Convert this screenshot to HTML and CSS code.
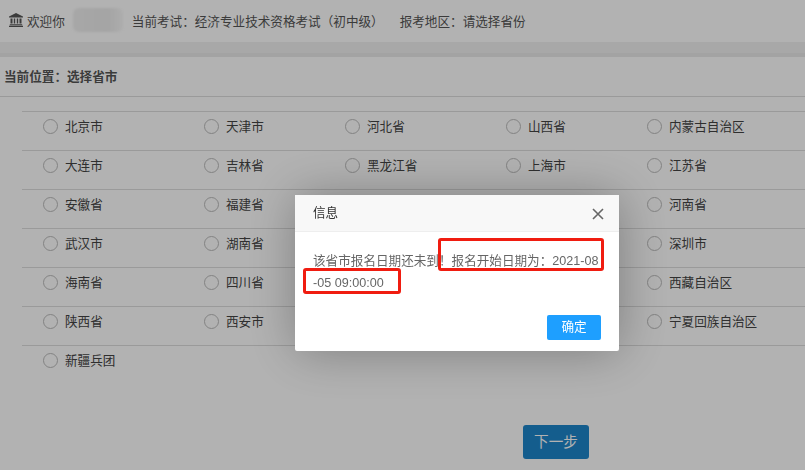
FILE: index.html
```html
<!DOCTYPE html>
<html lang="zh-CN">
<head>
    <meta charset="UTF-8">
    <meta name="viewport" content="width=device-width, initial-scale=1.0">
    <title>选择省市</title>
    <link rel="stylesheet" href="styles.css">
</head>
<body>
    <div class="header">
        <svg class="bank" viewBox="0 0 14 14" width="14" height="14">
            <path d="M7 0 L14 3.4 V4.6 H0 V3.4 Z M1.5 5.5 H3.5 V10.5 H1.5 Z M4.8 5.5 H6.2 V10.5 H4.8 Z M7.8 5.5 H9.2 V10.5 H7.8 Z M10.5 5.5 H12.5 V10.5 H10.5 Z M0.8 11.2 H13.2 V12.3 H0.8 Z M0 12.8 H14 V14 H0 Z" fill="#555"/>
        </svg>
        <span class="welcome">欢迎你</span>
        <span class="name-blur"></span>
        <span class="exam">当前考试：经济专业技术资格考试（初中级）</span>
        <span class="area">报考地区：请选择省份</span>
    </div>
    <div class="band"></div>
    <div class="location">当前位置：选择省市</div>

    <div class="cities">
        <div class="city-row">
            <label class="city"><i class="radio"></i>北京市</label>
            <label class="city"><i class="radio"></i>天津市</label>
            <label class="city"><i class="radio"></i>河北省</label>
            <label class="city"><i class="radio"></i>山西省</label>
            <label class="city"><i class="radio"></i>内蒙古自治区</label>
        </div>
        <div class="city-row">
            <label class="city"><i class="radio"></i>大连市</label>
            <label class="city"><i class="radio"></i>吉林省</label>
            <label class="city"><i class="radio"></i>黑龙江省</label>
            <label class="city"><i class="radio"></i>上海市</label>
            <label class="city"><i class="radio"></i>江苏省</label>
        </div>
        <div class="city-row">
            <label class="city"><i class="radio"></i>安徽省</label>
            <label class="city"><i class="radio"></i>福建省</label>
            <label class="city"><i class="radio"></i>江西省</label>
            <label class="city"><i class="radio"></i>山东省</label>
            <label class="city"><i class="radio"></i>河南省</label>
        </div>
        <div class="city-row">
            <label class="city"><i class="radio"></i>武汉市</label>
            <label class="city"><i class="radio"></i>湖南省</label>
            <label class="city"><i class="radio"></i>广东省</label>
            <label class="city"><i class="radio"></i>广西壮族自治区</label>
            <label class="city"><i class="radio"></i>深圳市</label>
        </div>
        <div class="city-row">
            <label class="city"><i class="radio"></i>海南省</label>
            <label class="city"><i class="radio"></i>四川省</label>
            <label class="city"><i class="radio"></i>贵州省</label>
            <label class="city"><i class="radio"></i>云南省</label>
            <label class="city"><i class="radio"></i>西藏自治区</label>
        </div>
        <div class="city-row">
            <label class="city"><i class="radio"></i>陕西省</label>
            <label class="city"><i class="radio"></i>西安市</label>
            <label class="city"><i class="radio"></i>甘肃省</label>
            <label class="city"><i class="radio"></i>青海省</label>
            <label class="city"><i class="radio"></i>宁夏回族自治区</label>
        </div>
        <div class="city-row">
            <label class="city"><i class="radio"></i>新疆兵团</label>
        </div>
    </div>

    <div class="actions">
        <button class="next" type="button">下一步</button>
    </div>

    <div class="shade"></div>

    <div class="dialog">
        <div class="dialog-title">信息
            <svg class="close" viewBox="0 0 12 12" width="12" height="12">
                <path d="M1 1 L11 11 M11 1 L1 11" stroke="#666" stroke-width="1.6" fill="none"/>
            </svg>
        </div>
        <div class="dialog-body">该省市报名日期还未到！报名开始日期为：2021-08-05 09:00:00</div>
        <div class="dialog-btns">
            <a class="dialog-ok">确定</a>
        </div>
    </div>

    <div class="mark mark-a"></div>
    <div class="mark mark-b"></div>
</body>
</html>
```

FILE: styles.css
```css
body {
    margin: 0;
    padding: 0;
    height: 470px;
    overflow: hidden;
    background-color: #fff;
    color: #555;
    font-family: "Liberation Sans", "Noto Sans CJK SC", sans-serif;
    font-size: 12.6px;
}
.header {
    height: 42px;
    padding-left: 9px;
    display: flex;
    align-items: center;
}
.bank {
    margin-right: 4px;
    margin-top: -2px;
}
.welcome {
    margin-top: -2px;
}
.name-blur {
    width: 50px;
    height: 24px;
    margin: -2px 9px 0 8px;
    background: linear-gradient(90deg, #f0f0f0 0, #ececec 70%, #f8f8f8 100%);
    border-radius: 6px;
    filter: blur(1px);
}
.exam {
    margin-top: -2px;
}
.area {
    margin: -2px 0 0 16px;
}
.band {
    height: 15px;
    background: linear-gradient(#f1f1f1 0, #f1f1f1 11px, #eaeaea 11px);
}
.location {
    height: 40px;
    line-height: 40px;
    padding-left: 4px;
    font-weight: bold;
    border-bottom: 1px solid #ddd;
    box-sizing: border-box;
}
.cities {
    margin: 14px 0 0 22px;
}
.city-row {
    height: 39px;
    box-sizing: border-box;
    border-top: 1px solid #ddd;
    display: grid;
    grid-template-columns: 161px 141px 161px 141px 1fr;
}
.city {
    display: flex;
    align-items: center;
    height: 27px;
    padding-left: 21px;
    color: #444;
}
.radio {
    flex: none;
    width: 13px;
    height: 13px;
    margin: 2px 7px 0 0;
    border: 1px solid #bbb;
    border-radius: 50%;
    background-color: #fff;
}
.actions {
    margin-top: 41px;
    padding-left: 523px;
}
.next {
    width: 66px;
    height: 34px;
    padding: 0 0 3px;
    border: none;
    border-radius: 3px;
    background-color: #1e86cb;
    color: #fff;
    font: inherit;
    font-size: 14.6px;
}
.shade {
    position: fixed;
    top: 0;
    left: 0;
    right: 0;
    bottom: 0;
    background-color: rgba(0, 0, 0, 0.3);
}
.dialog {
    position: fixed;
    left: 295px;
    top: 195px;
    width: 324px;
    height: 156px;
    background-color: #fff;
    box-shadow: 1px 1px 50px rgba(0, 0, 0, 0.3);
    border-radius: 2px;
}
.dialog-title {
    height: 37px;
    line-height: 36px;
    padding-left: 18px;
    background-color: #f8f8f8;
    border-bottom: 1px solid #eee;
    box-sizing: border-box;
    color: #333;
    position: relative;
}
.close {
    position: absolute;
    right: 15px;
    top: 13px;
}
.dialog-body {
    padding: 18px 18px 0;
    height: 65px;
    line-height: 22px;
    color: #666;
    word-break: break-all;
}
.dialog-btns {
    padding-right: 18px;
    display: flex;
    justify-content: flex-end;
}
.dialog-ok {
    width: 54px;
    height: 25px;
    line-height: 25px;
    text-align: center;
    background-color: #1e9fff;
    color: #fff;
    border-radius: 2px;
}
.mark {
    position: fixed;
    border: 3px solid #f01c10;
    border-radius: 3px;
    box-sizing: border-box;
}
.mark-a {
    left: 438px;
    top: 238px;
    width: 166px;
    height: 33px;
}
.mark-b {
    left: 303px;
    top: 268px;
    width: 98px;
    height: 26px;
}
```
